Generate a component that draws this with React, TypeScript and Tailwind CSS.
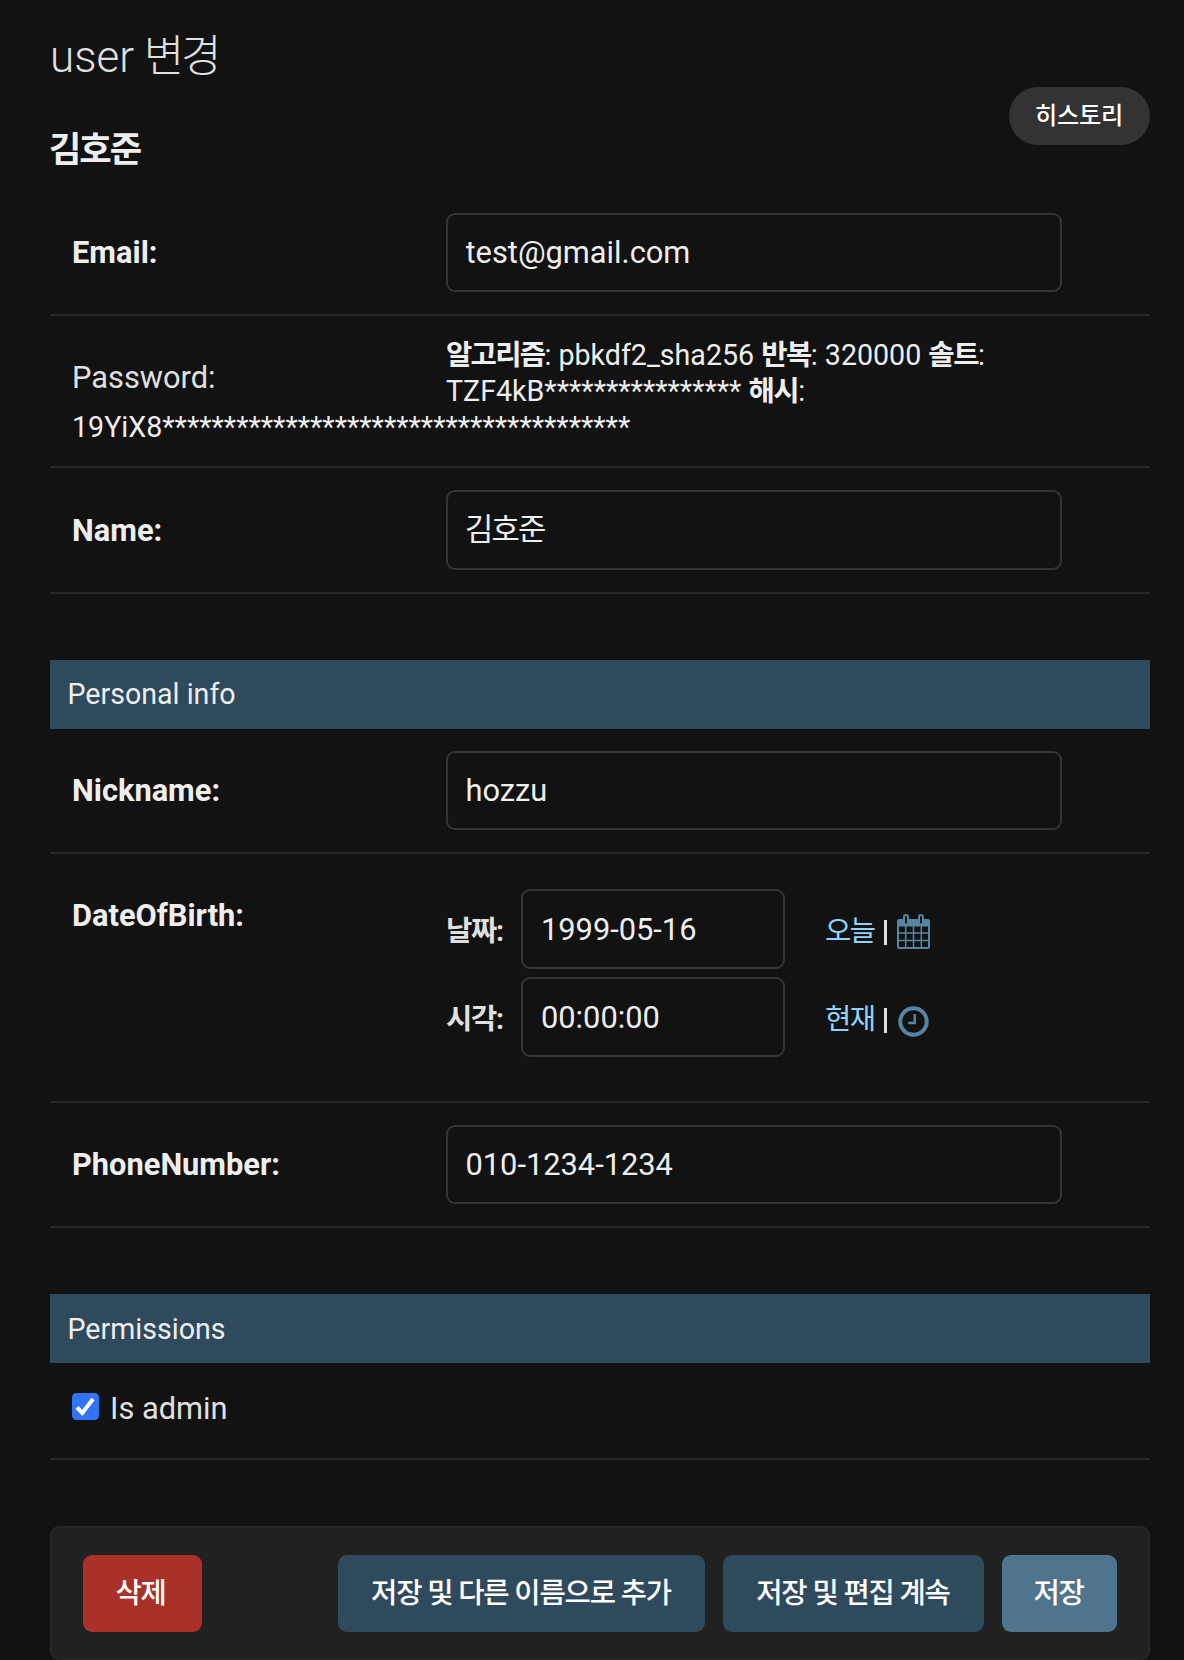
import { ReactNode } from 'react';
import clsx from 'clsx';

interface FieldRowProps {
  label: string;
  value: string;
  tall?: boolean;
}

interface DateTimeRowProps {
  label: string;
  value: string;
  shortcut: string;
  icon: ReactNode;
}

function CalendarIcon() {
  return (
    <svg className="h-9 w-[33px]" viewBox="0 0 33 36" fill="none" stroke="#5685a2">
      <path d="M1 8v24.500a1.500 1.500 0 0 0 1.500 1.500h28a1.500 1.500 0 0 0 1.500-1.500V8" strokeWidth="2" />
      <path d="M2 5h29a2 2 0 0 1 2 2V12.500H0V7a2 2 0 0 1 2-2z" fill="#5685a2" stroke="none" />
      <path d="M8.700 12v22M16.500 12v22M24.300 12v22M1 19h31M1 26.500h31" strokeWidth="1.500" />
      <path d="M7 8V3a2 2 0 0 1 4 0v5.500a2 2 0 0 1-4 0zM22 8V3a2 2 0 0 1 4 0v5.500a2 2 0 0 1-4 0z" fill="#121212" strokeWidth="2" />
    </svg>
  );
}

function ClockIcon() {
  return (
    <svg className="mt-0.5 h-[31px] w-[31px]" viewBox="0 0 31 31" fill="none" stroke="#5685a2">
      <circle cx="15.500" cy="15.500" r="13.200" strokeWidth="4" />
      <path d="M16.700 8v9h-6.500" strokeWidth="2.400" />
    </svg>
  );
}

function FieldRow({ label, value, tall = false }: FieldRowProps) {
  return (
    <div className="flex items-center border-b-2 border-[#272727] py-[22px] pl-[22px]">
      <label className={clsx('w-[374px] text-[30.8px] leading-9 font-bold', tall && 'pt-0.5')}>{label}</label>
      <input
        type="text"
        defaultValue={value}
        className={clsx(
          'w-[616px] rounded-[9px] border-2 border-[#353535] bg-transparent text-[30.8px] outline-none',
          tall ? 'h-20 px-[17px] pb-2 tracking-[-1.800px]' : 'h-[79px] px-[17.500px]'
        )}
      />
    </div>
  );
}

function DateTimeRow({ label, value, shortcut, icon }: DateTimeRowProps) {
  return (
    <div className="flex h-20 items-center">
      <span className="w-[75px] pt-1 text-[28.6px] leading-9 font-bold tracking-[-1.300px] text-[#e0e0e0]">{label}</span>
      <input
        type="text"
        defaultValue={value}
        className="h-20 w-[264px] rounded-[9px] border-2 border-[#353535] bg-transparent px-[18px] text-[30.8px] outline-none"
      />
      <div className="ml-10 flex items-center">
        <a href="#" className="w-[59px] pt-1 text-[28.6px] leading-9 tracking-[-1.500px] text-[#8fd3fb]">{shortcut}</a>
        <span className="mt-1.5 h-[25px] w-[3px] bg-[#e0e0e0]" />
        <span className="ml-2.5 flex w-[33px] justify-center pt-1.5">{icon}</span>
      </div>
    </div>
  );
}

function SectionTitle({ children }: { children: ReactNode }) {
  return (
    <h2 className="mt-[66px] h-[69px] bg-[#2f4a5c] pl-[17.500px] text-[28.6px]">{children}</h2>
  );
}

function SubmitRow() {
  return (
    <div className="mt-[66px] flex h-[134px] items-start rounded-[9px] border-2 border-[#272727] bg-[#212121] px-[31px] pt-[27px] text-[28.6px] leading-[74px] font-medium tracking-[-1.200px] text-white">
      <button className="h-[77px] w-[119px] rounded-[9px] bg-[#aa302a] pr-1 pb-px">삭제</button>
      <div className="ml-auto flex gap-[18px]">
        <button className="h-[77px] w-[367px] rounded-[9px] bg-[#2f4a5c] pr-px pb-px">저장 및 다른 이름으로 추가</button>
        <button className="h-[77px] w-[261px] rounded-[9px] bg-[#2f4a5c] pr-px pb-px">저장 및 편집 계속</button>
        <button className="h-[77px] w-[115px] rounded-[9px] bg-[#4f748e] pr-0.5 pb-px">저장</button>
      </div>
    </div>
  );
}

export default function App() {
  return (
    <div className="h-[1660px] w-[1184px] overflow-hidden bg-[#121212] px-[34px] pl-[50px] font-['Roboto','Noto_Sans_CJK_KR',sans-serif] text-[#eeeeee]">
      {/* Title */}
      <div className="flex h-[191px] justify-between">
        <div>
          <h1 className="pt-[30px] text-[44px] leading-[54px] font-[350] text-[#e0e0e0]">
            user <span className="-ml-px font-light tracking-[-3.200px]">변경</span>
          </h1>
          <h2 className="mt-[45px] -ml-px text-[35.2px] leading-[42px] font-bold tracking-[-2px]">김호준</h2>
        </div>
        <a href="#" className="mt-[87px] h-[58px] w-[141px] rounded-full bg-[#333333] pr-px text-center text-[24.2px] leading-[58px] font-medium tracking-[-0.300px] text-white">
          히스토리
        </a>
      </div>

      {/* Account */}
      <FieldRow label="Email:" value="test@gmail.com" />
      <div className="h-[152px] border-b-2 border-[#272727] pt-[21px] pl-[22px] text-[28.6px] leading-9">
        <div className="flex h-[72px]">
          <label className="w-[374px] pt-[23px] text-[30.8px] text-[#e0e0e0]">Password:</label>
          <p>
            <strong className="tracking-[-1.700px]">알고리즘</strong>: pbkdf2_sha256 <strong className="tracking-[-1.500px]">반복</strong>: 320000{' '}
            <strong className="tracking-[-1.500px]">솔트</strong>:<br />
            TZF4kB**************** <strong className="tracking-[-1.500px]">해시</strong>:
          </p>
        </div>
        <p>19YiX8**************************************</p>
      </div>
      <FieldRow label="Name:" value="김호준" tall />

      <SectionTitle>
        <span className="block leading-[69px]">Personal info</span>
      </SectionTitle>
      <FieldRow label="Nickname:" value="hozzu" />
      <div className="flex h-[249px] border-b-2 border-[#272727] pt-[35px] pl-[22px]">
        <label className="w-[374px] pt-[9px] text-[30.8px] leading-9 font-bold">DateOfBirth:</label>
        <div className="flex flex-col gap-2">
          <DateTimeRow label="날짜:" value="1999-05-16" shortcut="오늘" icon={<CalendarIcon />} />
          <DateTimeRow label="시각:" value="00:00:00" shortcut="현재" icon={<ClockIcon />} />
        </div>
      </div>
      <FieldRow label="PhoneNumber:" value="010-1234-1234" />

      <SectionTitle>
        <span className="block leading-[70px]">Permissions</span>
      </SectionTitle>
      <div className="flex h-[97px] items-start border-b-2 border-[#272727] pt-[30px] pl-[22px]">
        <svg className="h-[27px] w-[27px]" viewBox="0 0 27 27">
          <rect width="27" height="27" rx="4.500" fill="#3174f6" />
          <path d="M5 14.500l5.300 5.500L21 6" fill="none" stroke="#fff" strokeWidth="4" />
        </svg>
        <label className="-mt-0.5 ml-[11px] text-[30.8px] leading-9 text-[#e0e0e0]">Is admin</label>
      </div>

      <SubmitRow />
    </div>
  );
}
